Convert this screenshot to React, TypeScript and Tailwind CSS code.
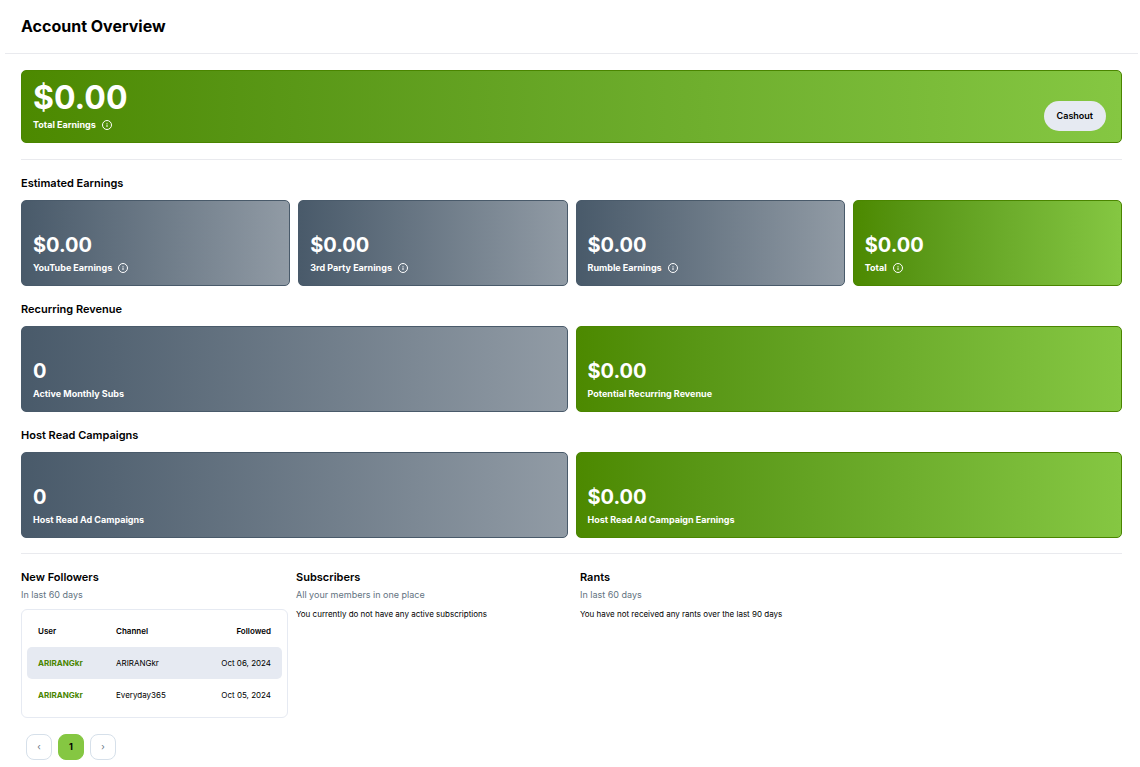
import { clsx } from "clsx";
import type { ReactNode } from "react";

type Tone = "slate" | "green";

const tones: Record<Tone, string> = {
  slate: "border-[#495a6a] from-[#495a6a] to-[#919ba5]",
  green: "border-[#4a8500] from-[#4c8900] to-[#85c742]",
};

const followers = [
  { user: "ARIRANGkr", channel: "ARIRANGkr", followed: "Oct 06, 2024" },
  { user: "ARIRANGkr", channel: "Everyday365", followed: "Oct 05, 2024" },
];

function InfoButton({ label }: { label: string }) {
  return (
    <button type="button" aria-label={`About ${label}`} className="ml-[6px] size-[10px]">
      <svg viewBox="0 0 20 20" className="size-[10px]" fill="none" stroke="currentColor" strokeWidth="2">
        <circle cx="10" cy="10" r="9" />
        <path d="M10 9v5" />
        <circle cx="10" cy="6.5" r="1.2" fill="currentColor" stroke="none" />
      </svg>
    </button>
  );
}

function StatCard({ value, label, tone, info }: { value: string; label: string; tone: Tone; info?: boolean }) {
  return (
    <div className={clsx("rounded-[5px] border bg-linear-to-r px-[11px] pt-8 pb-[9px] text-white", tones[tone])}>
      <p className="text-xl leading-6 font-bold">{value}</p>
      <div className="mt-[3px] flex items-center">
        <p className="text-[9px] leading-4 font-bold">{label}</p>
        {info && <InfoButton label={label} />}
      </div>
    </div>
  );
}

function Section({ title, className, children }: { title: string; className: string; children: ReactNode }) {
  return (
    <section>
      <h2 className="text-[11px] leading-4 font-semibold">{title}</h2>
      <div className={clsx("mt-[9px] grid gap-2", className)}>{children}</div>
    </section>
  );
}

function ListHeading({ title, subtitle }: { title: string; subtitle: string }) {
  return (
    <>
      <h2 className="text-[11px] leading-4 font-semibold">{title}</h2>
      <p className="mt-1 text-[9px] leading-3 text-[#637381]">{subtitle}</p>
    </>
  );
}

function FollowersTable() {
  return (
    <div className="mt-2 rounded-md border border-[#e6eaf2] px-[5px] pt-[5px] pb-[6px]">
      <table className="w-full border-separate border-spacing-0 text-[8px]">
        <thead>
          <tr className="h-8">
            <th className="w-[89px] pl-[11px] text-left font-semibold">User</th>
            <th className="text-left font-semibold">Channel</th>
            <th className="pr-[11px] text-right font-semibold">Followed</th>
          </tr>
        </thead>
        <tbody>
          {followers.map((f) => (
            <tr key={f.channel} className="h-8 odd:[&>td]:bg-[#e6eaf2] [&>td:first-child]:rounded-l-[5px] [&>td:last-child]:rounded-r-[5px]">
              <td className="pl-[11px]">
                <a href="#" className="font-bold text-[#4a8500]">{f.user}</a>
              </td>
              <td>{f.channel}</td>
              <td className="pr-[11px] text-right">{f.followed}</td>
            </tr>
          ))}
        </tbody>
      </table>
    </div>
  );
}

function Pagination() {
  const base = "flex size-[26px] items-center justify-center rounded-lg border text-[9px]";
  return (
    <nav aria-label="Followers pages" className="mt-4 ml-[5px] flex gap-[6px]">
      <button type="button" aria-label="Previous page" className={clsx(base, "border-[#d6e0ea] text-[#637381]")}>‹</button>
      <button type="button" aria-current="page" className={clsx(base, "border-[#85c742] bg-[#85c742] font-bold")}>1</button>
      <button type="button" aria-label="Next page" className={clsx(base, "border-[#d6e0ea] text-[#637381]")}>›</button>
    </nav>
  );
}

export default function App() {
  return (
    <div className="bg-white pr-[2px] pl-[5px] font-['Inter',sans-serif] text-black">
      <header className="border-b border-[#e9eaee] px-4 pt-[14px] pb-[15px]">
        <h1 className="text-base leading-6 font-bold">Account Overview</h1>
      </header>

      <main className="px-4 pt-4">
        <div className="flex items-end justify-between rounded-[5px] border border-[#4a8500] bg-linear-to-r from-[#4c8900] to-[#85c742] px-[11px] pt-[7px] pb-[10px] text-white">
          <div>
            <p className="text-[32px] leading-10 font-bold">$0.00</p>
            <div className="flex items-center">
              <p className="text-[9px] leading-[14px] font-bold">Total Earnings</p>
              <InfoButton label="Total Earnings" />
            </div>
          </div>
          <button type="button" className="mr-1 mb-px h-[30px] rounded-full bg-[#e6eaf2] px-[13px] text-[9px] font-semibold text-black">
            Cashout
          </button>
        </div>

        <div className="mt-4 flex flex-col gap-[15px] border-y border-[#e9eaee] pt-[15px] pb-[15px]">
          <Section title="Estimated Earnings" className="grid-cols-4">
            <StatCard value="$0.00" label="YouTube Earnings" tone="slate" info />
            <StatCard value="$0.00" label="3rd Party Earnings" tone="slate" info />
            <StatCard value="$0.00" label="Rumble Earnings" tone="slate" info />
            <StatCard value="$0.00" label="Total" tone="green" info />
          </Section>
          <Section title="Recurring Revenue" className="grid-cols-2">
            <StatCard value="0" label="Active Monthly Subs" tone="slate" />
            <StatCard value="$0.00" label="Potential Recurring Revenue" tone="green" />
          </Section>
          <Section title="Host Read Campaigns" className="grid-cols-2">
            <StatCard value="0" label="Host Read Ad Campaigns" tone="slate" />
            <StatCard value="$0.00" label="Host Read Ad Campaign Earnings" tone="green" />
          </Section>
        </div>

        <div className="grid grid-cols-[267fr_276fr_542fr] gap-2 pt-[15px]">
          <section>
            <ListHeading title="New Followers" subtitle="In last 60 days" />
            <FollowersTable />
            <Pagination />
          </section>
          <section>
            <ListHeading title="Subscribers" subtitle="All your members in one place" />
            <p className="mt-[7px] text-[8px] leading-3">You currently do not have any active subscriptions</p>
          </section>
          <section>
            <ListHeading title="Rants" subtitle="In last 60 days" />
            <p className="mt-[7px] text-[8px] leading-3">You have not received any rants over the last 90 days</p>
          </section>
        </div>
      </main>
    </div>
  );
}
